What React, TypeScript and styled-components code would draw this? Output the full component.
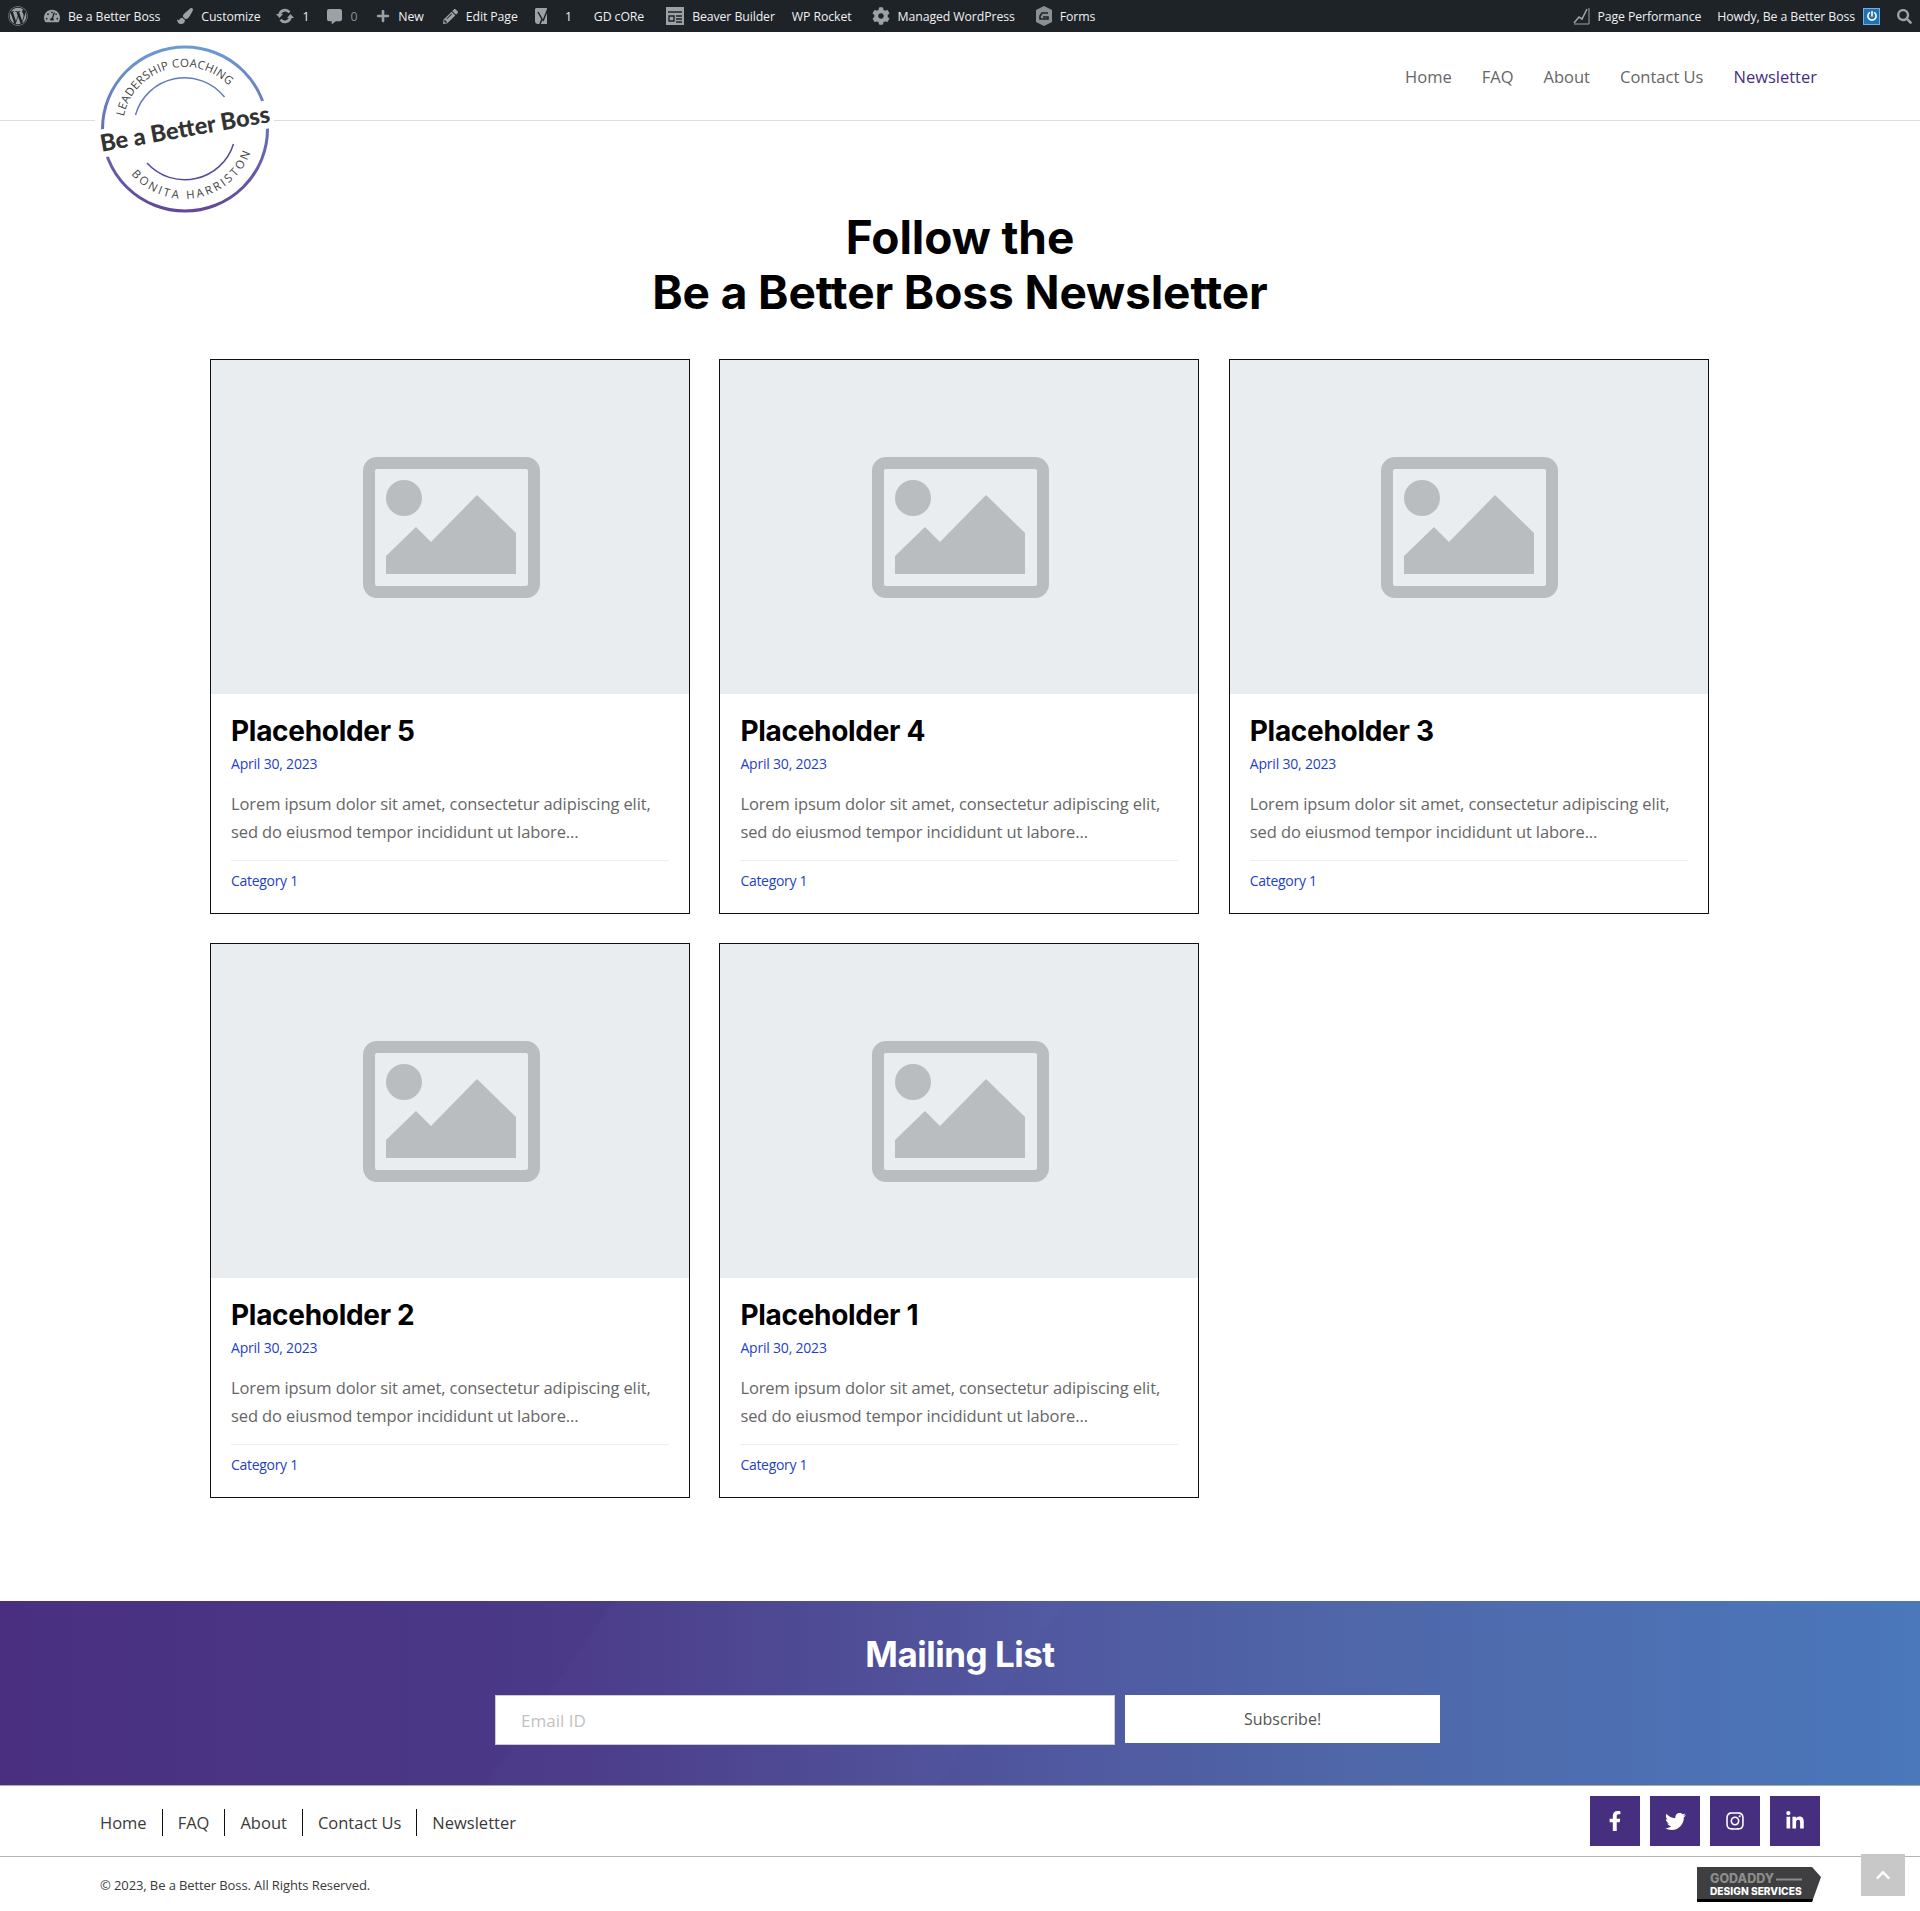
import React from 'react';
import styled, { createGlobalStyle } from 'styled-components';
import {
  FaWordpress,
  FaTachometerAlt,
  FaPaintBrush,
  FaCommentAlt,
  FaPlus,
  FaPencilAlt,
  FaCog,
  FaPowerOff,
  FaSearch,
  FaFacebookF,
  FaTwitter,
  FaInstagram,
  FaLinkedinIn,
  FaChevronUp,
} from 'react-icons/fa';

const bodyFont = '"Open Sans", "Noto Sans", sans-serif';
const headFont = 'Inter, "Open Sans", sans-serif';

const GlobalStyle = createGlobalStyle`
  html, body { margin: 0; padding: 0; background: #fff; }
  body { font-family: ${bodyFont}; }
  * { box-sizing: border-box; }
`;

const Page = styled.div`
  width: 1920px;
  height: 1911px;
  position: relative;
  overflow: hidden;
`;

/* admin bar */
const AdminBar = styled.div`
  height: 32px;
  background: #1d2327;
  color: #f0f0f1;
  display: flex;
  justify-content: space-between;
  align-items: center;
  padding: 0 8px;
  font-size: 12.3px;
  letter-spacing: -0.1px;
`;

const AdminGroup = styled.div`
  display: flex;
  align-items: center;
`;

const AdminItem = styled.span<{ $left?: number }>`
  display: inline-flex;
  align-items: center;
  gap: 8px;
  margin-left: ${p => p.$left ?? 16}px;
  white-space: nowrap;
  svg { color: #9ca1a7; display: block; }
`;

const MutedCount = styled.span`
  color: #8c8f94;
`;

const PowerBox = styled.span`
  width: 17px;
  height: 17px;
  background: #2271b1;
  border: 1px solid #72aee6;
  display: inline-flex;
  align-items: center;
  justify-content: center;
  svg { color: #fff; }
`;

/* header */
const Header = styled.header`
  height: 89px;
  border-bottom: 1px solid #ddd;
  display: flex;
  justify-content: flex-end;
  align-items: center;
  padding: 0 103px 0 0;
`;

const NavList = styled.nav`
  display: flex;
  gap: 30px;
  margin-top: 1px;
`;

const NavLink = styled.a<{ $active?: boolean }>`
  font-size: 16.5px;
  font-weight: 400;
  color: ${p => (p.$active ? '#472f80' : '#666')};
`;

const LogoWrap = styled.div`
  position: absolute;
  left: 95px;
  top: 44px;
  width: 179px;
  height: 172px;
  background: #fff;
`;

/* main */
const Main = styled.main`
  padding-top: 89px;
`;

const PageTitle = styled.h1`
  margin: 0 0 39px;
  text-align: center;
  font-family: ${headFont};
  font-weight: 700;
  font-size: 46px;
  line-height: 55px;
  letter-spacing: -0.1px;
  color: #000;
`;

const CardGrid = styled.div`
  display: grid;
  grid-template-columns: repeat(3, 480px);
  column-gap: 29.4px;
  row-gap: 29px;
  margin-left: 210px;
`;

const Card = styled.article`
  height: 555px;
  border: 1px solid #111;
  display: flex;
  flex-direction: column;
`;

const Thumb = styled.div`
  height: 334px;
  background: #e9edf0;
  display: flex;
  align-items: center;
  justify-content: center;
  padding-left: 2px;
`;

const CardBody = styled.div`
  padding: 0 20px;
`;

const CardTitle = styled.h2`
  margin: 20px 0 0;
  font-family: ${headFont};
  font-size: 28px;
  line-height: 34px;
  font-weight: 700;
  letter-spacing: -0.3px;
  color: #000;
`;

const CardDate = styled.div`
  margin-top: 6px;
  font-size: 14px;
  line-height: 20px;
  letter-spacing: -0.2px;
  color: #1f3fc4;
`;

const CardText = styled.p`
  margin: 16px 0 0;
  font-size: 16.5px;
  line-height: 28px;
  letter-spacing: -0.1px;
  color: #666;
  font-weight: 400;
`;

const CardFooter = styled.div`
  margin-top: 14px;
  border-top: 1px solid #eee;
  padding-top: 10px;
  font-size: 14px;
  line-height: 20px;
  letter-spacing: -0.3px;
  color: #1f3fc4;
`;

/* mailing list */
const MailingSection = styled.section`
  margin-top: 103px;
  height: 185px;
  background:
    linear-gradient(125deg, transparent 30%, rgba(255, 255, 255, 0.012) 30%, rgba(255, 255, 255, 0.012) 52%, transparent 52%),
    linear-gradient(90deg, #4a2f80 0%, #4a3a88 30%, #5058a0 55%, #4f68aa 72%, #4a78bb 100%);
  border-bottom: 1px solid #aaa;
  padding-top: 31px;
`;

const MailingTitle = styled.h2`
  margin: 0 0 19px;
  text-align: center;
  font-family: ${headFont};
  font-size: 35px;
  line-height: 44px;
  font-weight: 700;
  letter-spacing: -0.5px;
  color: #fff;
`;

const MailingForm = styled.form`
  display: flex;
  align-items: flex-start;
  gap: 10px;
  margin-left: 495px;
`;

const EmailInput = styled.input`
  width: 620px;
  height: 50px;
  border: 1px solid #ccc;
  background: #fff;
  padding: 0 25px;
  font-family: ${bodyFont};
  font-size: 17px;
  &::placeholder { color: #c2c2c2; opacity: 1; }
`;

const SubscribeButton = styled.button`
  width: 315px;
  height: 48px;
  border: 0;
  background: #fff;
  font-family: ${bodyFont};
  font-size: 16px;
  color: #555;
`;

/* footer */
const FooterTop = styled.div`
  height: 71px;
  border-bottom: 1px solid #b5b5b5;
  display: flex;
  justify-content: space-between;
  align-items: center;
  padding: 0 100px;
`;

const FooterNav = styled.nav`
  display: flex;
  align-items: center;
  margin-top: 3px;
`;

const FooterLink = styled.a`
  font-size: 16.5px;
  line-height: 27px;
  color: #3a3a3a;
  padding: 0 15px;
  border-left: 1px solid #111;
  &:first-child { padding-left: 0; border-left: 0; }
`;

const Socials = styled.div`
  display: flex;
  gap: 10px;
`;

const SocialButton = styled.a`
  width: 50px;
  height: 50px;
  background: #472f80;
  color: #fff;
  display: flex;
  align-items: center;
  justify-content: center;
`;

const FooterBottom = styled.div`
  display: flex;
  justify-content: space-between;
  align-items: center;
  padding: 10px 99px 0 100px;
`;

const Copyright = styled.div`
  font-size: 13px;
  letter-spacing: -0.1px;
  color: #3a3a3a;
`;

const BackToTop = styled.a`
  position: absolute;
  left: 1861px;
  top: 1854px;
  width: 44px;
  height: 42px;
  background: #c8c8c8;
  color: #fff;
  display: flex;
  align-items: center;
  justify-content: center;
`;

const PlaceholderIcon = () => (
  <svg width="177" height="141" viewBox="0 0 177 141">
    <rect x="6" y="6" width="165" height="129" rx="8" fill="none" stroke="#b9bdbf" strokeWidth="12" />
    <circle cx="41" cy="41" r="18" fill="#b9bdbf" />
    <polygon points="23,117 23,99 53,70 68,85 114,38 153,76 153,117" fill="#b9bdbf" />
  </svg>
);

const Logo = () => (
  <svg width="179" height="172" viewBox="0 0 179 172">
    <defs>
      <linearGradient id="ring" x1="0" y1="0" x2="0" y2="1">
        <stop offset="0" stopColor="#6b9ad0" />
        <stop offset="1" stopColor="#63479a" />
      </linearGradient>
      <path id="arcTop" d="M 28.8 72.4 A 62 62 0 0 1 138.4 46.8" fill="none" />
      <path id="arcBottom" d="M 36.2 130.2 A 70 70 0 0 0 156.7 104.5" fill="none" />
    </defs>
    <ellipse cx="90" cy="85" rx="82.5" ry="82" fill="none" stroke="url(#ring)" strokeWidth="3" />
    <path d="M 40.5 71 A 51 51 0 0 1 129.5 53" fill="none" stroke="#5f7dbd" strokeWidth="1.5" />
    <path d="M 52 119 A 51 51 0 0 0 138.5 100" fill="none" stroke="#5a479e" strokeWidth="1.5" />
    <text fontFamily="Open Sans, sans-serif" fontSize="11.5" fill="#444">
      <textPath href="#arcTop" textLength="134" lengthAdjust="spacing">LEADERSHIP COACHING</textPath>
    </text>
    <text fontFamily="Open Sans, sans-serif" fontSize="11.5" fill="#444">
      <textPath href="#arcBottom" textLength="146" lengthAdjust="spacing">BONITA HARRISTON</textPath>
    </text>
    <g transform="rotate(-10 89.5 85)">
      <rect x="-4" y="71" width="187" height="28" fill="#fff" />
      <text x="90" y="93" textAnchor="middle" fontFamily="Lato, sans-serif" fontWeight="900" fontSize="23.5" fill="#333">
        Be a Better Boss
      </text>
    </g>
  </svg>
);

const GoDaddyBadge = () => (
  <svg width="124" height="35" viewBox="0 0 124 35">
    <polygon points="0,0 115,0 124,10 115,35 0,35" fill="#3f3f41" />
    <polygon points="0,32 116,32 115,35 0,35" fill="#000" />
    <text x="13" y="16" fontFamily="Inter, sans-serif" fontWeight="800" fontSize="12.5" fill="#8c8c8c">GODADDY</text>
    <rect x="79" y="11.5" width="26" height="2" fill="#8c8c8c" />
    <text x="13" y="28" fontFamily="Inter, sans-serif" fontWeight="800" fontSize="10.2" fill="#fff">DESIGN SERVICES</text>
  </svg>
);

const UpdateIcon = () => (
  <svg width="18" height="16" viewBox="0 0 18 16">
    <path d="M3.5 7a5.6 5.6 0 0 1 10-2.6M14.5 9a5.6 5.6 0 0 1-10 2.6" fill="none" stroke="#9ca1a7" strokeWidth="2.6" />
    <polygon points="0,6 7,6 3.5,10" fill="#9ca1a7" />
    <polygon points="11,10 18,10 14.5,6" fill="#9ca1a7" />
  </svg>
);

const FormsIcon = () => (
  <svg width="16" height="20" viewBox="0 0 16 20">
    <polygon points="8,0 16,4 16,16 8,20 0,16 0,4" fill="#8c8f94" />
    <path d="M12 7H6L4 10v3h8v-2H7" fill="none" stroke="#1d2327" strokeWidth="1.6" />
  </svg>
);

const BeaverIcon = () => (
  <svg width="18" height="18" viewBox="0 0 18 18">
    <rect width="18" height="18" fill="#9ca1a7" />
    <path d="M2 5h14M3 9h5v5H3zM10 9h6M10 12h6M10 15h6" stroke="#1d2327" strokeWidth="1.4" fill="none" />
  </svg>
);

const YoastIcon = () => (
  <svg width="18" height="22" viewBox="0 0 18 22">
    <path d="M3 3h11l0 16H5a3 3 0 0 1-3-3V4z" fill="#9ca1a7" />
    <path d="M5 7l4 7-2 5M16 1l-6 15" fill="none" stroke="#1d2327" strokeWidth="1.5" />
  </svg>
);

const ChartIcon = () => (
  <svg width="17" height="20" viewBox="0 0 17 20">
    <path d="M1 18h15V2" fill="none" stroke="#9ca1a7" strokeWidth="1" />
    <path d="M1 17l5-6 3 2 5-10" fill="none" stroke="#9ca1a7" strokeWidth="1.6" />
  </svg>
);

const posts = ['Placeholder 5', 'Placeholder 4', 'Placeholder 3', 'Placeholder 2', 'Placeholder 1'];
const navItems = ['Home', 'FAQ', 'About', 'Contact Us', 'Newsletter'];

const App: React.FC = () => (
  <Page>
    <GlobalStyle />
    <AdminBar>
      <AdminGroup>
        <AdminItem $left={0}><FaWordpress size={20} /></AdminItem>
        <AdminItem><FaTachometerAlt size={16} />Be a Better Boss</AdminItem>
        <AdminItem $left={17}><FaPaintBrush size={16} />Customize</AdminItem>
        <AdminItem $left={16}><UpdateIcon />1</AdminItem>
        <AdminItem $left={18}><FaCommentAlt size={15} /><MutedCount>0</MutedCount></AdminItem>
        <AdminItem $left={19}><FaPlus size={14} />New</AdminItem>
        <AdminItem $left={19}><FaPencilAlt size={15} />Edit Page</AdminItem>
        <AdminItem $left={15}><YoastIcon />&nbsp;&nbsp;1</AdminItem>
        <AdminItem $left={22}>GD cORe</AdminItem>
        <AdminItem $left={22}><BeaverIcon />Beaver Builder</AdminItem>
        <AdminItem $left={17}>WP Rocket</AdminItem>
        <AdminItem $left={20}><FaCog size={18} />Managed WordPress</AdminItem>
        <AdminItem $left={21}><FormsIcon />Forms</AdminItem>
      </AdminGroup>
      <AdminGroup>
        <AdminItem><ChartIcon />Page Performance</AdminItem>
        <AdminItem $left={16}>Howdy, Be a Better Boss<PowerBox><FaPowerOff size={10} /></PowerBox></AdminItem>
        <AdminItem $left={17}><FaSearch size={15} /></AdminItem>
      </AdminGroup>
    </AdminBar>

    <Header>
      <NavList>
        {navItems.map(item => (
          <NavLink key={item} $active={item === 'Newsletter'}>{item}</NavLink>
        ))}
      </NavList>
    </Header>
    <LogoWrap><Logo /></LogoWrap>

    <Main>
      <PageTitle>Follow the<br />Be a Better Boss Newsletter</PageTitle>
      <CardGrid>
        {posts.map(title => (
          <Card key={title}>
            <Thumb><PlaceholderIcon /></Thumb>
            <CardBody>
              <CardTitle>{title}</CardTitle>
              <CardDate>April 30, 2023</CardDate>
              <CardText>
                Lorem ipsum dolor sit amet, consectetur adipiscing elit,<br />
                sed do eiusmod tempor incididunt ut labore...
              </CardText>
              <CardFooter>Category 1</CardFooter>
            </CardBody>
          </Card>
        ))}
      </CardGrid>
    </Main>

    <MailingSection>
      <MailingTitle>Mailing List</MailingTitle>
      <MailingForm>
        <EmailInput placeholder="Email ID" />
        <SubscribeButton type="button">Subscribe!</SubscribeButton>
      </MailingForm>
    </MailingSection>

    <footer>
      <FooterTop>
        <FooterNav>
          {navItems.map(item => <FooterLink key={item}>{item}</FooterLink>)}
        </FooterNav>
        <Socials>
          <SocialButton><FaFacebookF size={20} /></SocialButton>
          <SocialButton><FaTwitter size={21} /></SocialButton>
          <SocialButton><FaInstagram size={20} /></SocialButton>
          <SocialButton><FaLinkedinIn size={20} /></SocialButton>
        </Socials>
      </FooterTop>
      <FooterBottom>
        <Copyright>© 2023, Be a Better Boss. All Rights Reserved.</Copyright>
        <GoDaddyBadge />
      </FooterBottom>
    </footer>
    <BackToTop><FaChevronUp size={16} /></BackToTop>
  </Page>
);

export default App;
